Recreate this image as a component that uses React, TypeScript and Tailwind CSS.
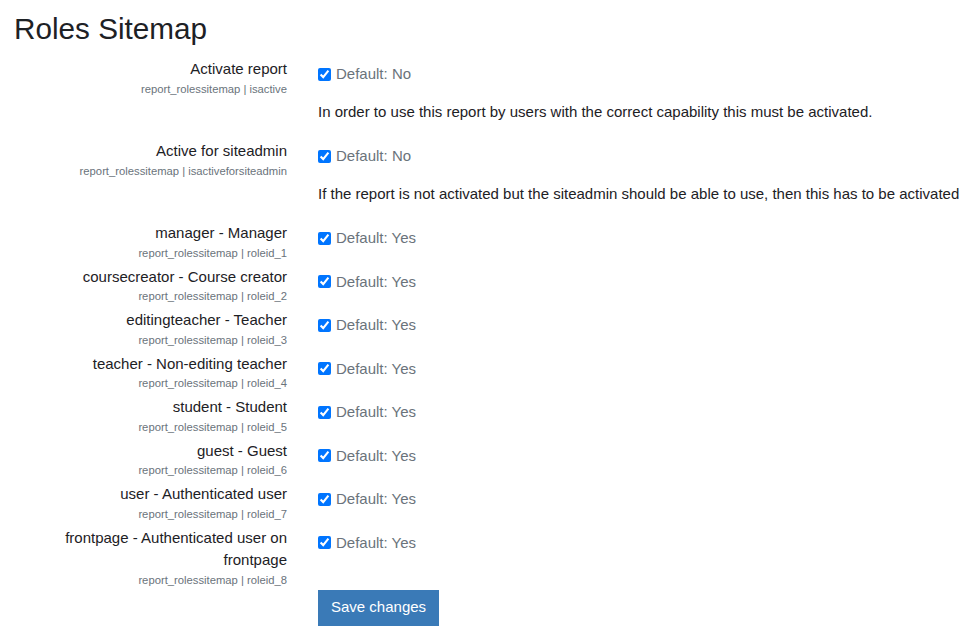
const settings = [
  {
    label: 'Activate report',
    name: 'report_rolessitemap | isactive',
    value: 'No',
    desc: 'In order to use this report by users with the correct capability this must be activated.',
  },
  {
    label: 'Active for siteadmin',
    name: 'report_rolessitemap | isactiveforsiteadmin',
    value: 'No',
    desc: 'If the report is not activated but the siteadmin should be able to use, then this has to be activated',
  },
  { label: 'manager - Manager', name: 'report_rolessitemap | roleid_1', value: 'Yes' },
  { label: 'coursecreator - Course creator', name: 'report_rolessitemap | roleid_2', value: 'Yes' },
  { label: 'editingteacher - Teacher', name: 'report_rolessitemap | roleid_3', value: 'Yes' },
  { label: 'teacher - Non-editing teacher', name: 'report_rolessitemap | roleid_4', value: 'Yes' },
  { label: 'student - Student', name: 'report_rolessitemap | roleid_5', value: 'Yes' },
  { label: 'guest - Guest', name: 'report_rolessitemap | roleid_6', value: 'Yes' },
  { label: 'user - Authenticated user', name: 'report_rolessitemap | roleid_7', value: 'Yes' },
  { label: 'frontpage - Authenticated user on frontpage', name: 'report_rolessitemap | roleid_8', value: 'Yes' },
];

export default function App() {
  return (
    <div
      className="min-h-screen bg-white text-[#1d2125] text-[15px] leading-[22.5px]"
      style={{ fontFamily: '"Liberation Sans", Arial, sans-serif' }}
    >
      <h2 className="pl-[14px] pt-[11px] mb-[11px] text-[29.7px] leading-[36px] font-normal">Roles Sitemap</h2>

      <form>
        {settings.map((s) => (
          <div key={s.name} className="flex mb-[4px]">
            {/* label column */}
            <div className="w-[287px] shrink-0 text-right">
              <div>{s.label}</div>
              <div className="text-[11.25px] leading-[17px] text-[#6a737b]">{s.name}</div>
            </div>

            {/* setting column */}
            <div className="pl-[31px] pt-[5px]">
              <label className="flex items-center">
                <input type="checkbox" defaultChecked className="w-[13px] h-[13px] mr-[5px]" />
                <span className="text-[#6a737b]">Default: {s.value}</span>
              </label>
              {s.desc && <p className="mt-[15.5px] mb-[12.5px] whitespace-nowrap">{s.desc}</p>}
            </div>
          </div>
        ))}

        <div className="pl-[318px] -mt-[3px]">
          <button
            type="button"
            className="bg-[#3a7ab7] text-white px-[12px] h-[36px] leading-[22.5px] border border-[#3a7ab7]"
          >
            Save changes
          </button>
        </div>
      </form>
    </div>
  );
}
